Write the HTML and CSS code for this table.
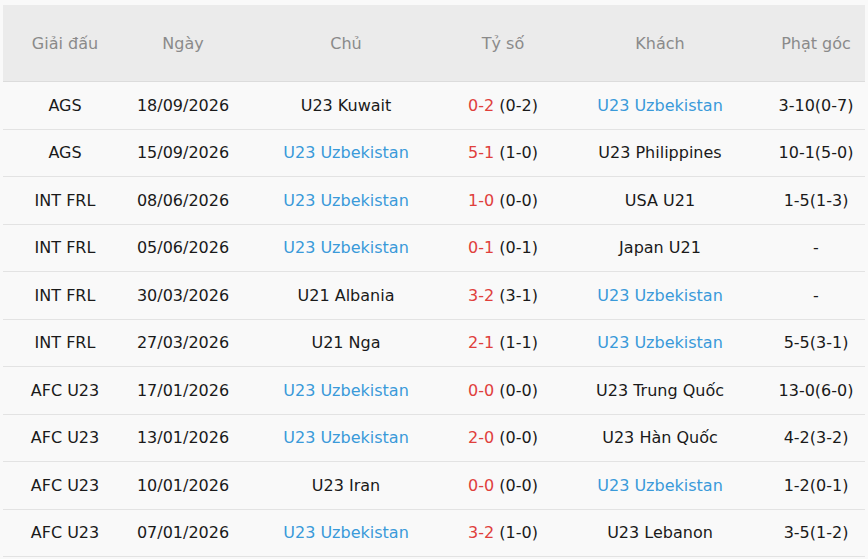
FILE: index.html
```html
<!DOCTYPE html>
<html lang="vi">
<head>
<meta charset="utf-8">
<link rel="stylesheet" href="styles.css">
</head>
<body>
<table class="matches">
  <colgroup>
    <col class="c1"><col class="c2"><col class="c3"><col class="c4"><col class="c5"><col class="c6">
  </colgroup>
  <thead>
    <tr><th>Giải đấu</th><th>Ngày</th><th>Chủ</th><th>Tỷ số</th><th>Khách</th><th>Phạt góc</th></tr>
  </thead>
  <tbody>
    <tr><td>AGS</td><td>18/09/2026</td><td>U23 Kuwait</td><td><span class="ft">0-2</span> (0-2)</td><td class="team">U23 Uzbekistan</td><td>3-10(0-7)</td></tr>
    <tr><td>AGS</td><td>15/09/2026</td><td class="team">U23 Uzbekistan</td><td><span class="ft">5-1</span> (1-0)</td><td>U23 Philippines</td><td>10-1(5-0)</td></tr>
    <tr><td>INT FRL</td><td>08/06/2026</td><td class="team">U23 Uzbekistan</td><td><span class="ft">1-0</span> (0-0)</td><td>USA U21</td><td>1-5(1-3)</td></tr>
    <tr><td>INT FRL</td><td>05/06/2026</td><td class="team">U23 Uzbekistan</td><td><span class="ft">0-1</span> (0-1)</td><td>Japan U21</td><td>-</td></tr>
    <tr><td>INT FRL</td><td>30/03/2026</td><td>U21 Albania</td><td><span class="ft">3-2</span> (3-1)</td><td class="team">U23 Uzbekistan</td><td>-</td></tr>
    <tr><td>INT FRL</td><td>27/03/2026</td><td>U21 Nga</td><td><span class="ft">2-1</span> (1-1)</td><td class="team">U23 Uzbekistan</td><td>5-5(3-1)</td></tr>
    <tr><td>AFC U23</td><td>17/01/2026</td><td class="team">U23 Uzbekistan</td><td><span class="ft">0-0</span> (0-0)</td><td>U23 Trung Quốc</td><td>13-0(6-0)</td></tr>
    <tr><td>AFC U23</td><td>13/01/2026</td><td class="team">U23 Uzbekistan</td><td><span class="ft">2-0</span> (0-0)</td><td>U23 Hàn Quốc</td><td>4-2(3-2)</td></tr>
    <tr><td>AFC U23</td><td>10/01/2026</td><td>U23 Iran</td><td><span class="ft">0-0</span> (0-0)</td><td class="team">U23 Uzbekistan</td><td>1-2(0-1)</td></tr>
    <tr><td>AFC U23</td><td>07/01/2026</td><td class="team">U23 Uzbekistan</td><td><span class="ft">3-2</span> (1-0)</td><td>U23 Lebanon</td><td>3-5(1-2)</td></tr>
  </tbody>
</table>
</body>
</html>
```
FILE: styles.css
```css
html, body {
  margin: 0;
  padding: 0;
  background: #f9f9f9;
}
body {
  padding: 5px 3px 0 3px;
  font-family: "DejaVu Sans", sans-serif;
  font-size: 16px;
  color: #1a1a1a;
}
.matches {
  width: 862px;
  border-collapse: collapse;
  table-layout: fixed;
}
.c1 { width: 124px; }
.c2 { width: 112px; }
.c3 { width: 214px; }
.c4 { width: 100px; }
.c5 { width: 214px; }
.c6 { width: 98px; }
.matches th {
  height: 76px;
  background: #ebebeb;
  color: #8a8a8a;
  font-weight: normal;
  text-align: center;
  padding: 0;
  border-bottom: 1px solid #dcdcdc;
}
.matches td {
  height: 46.5px;
  padding: 0;
  text-align: center;
  background: #f9f9f9;
  border-bottom: 1px solid #e3e3e3;
  white-space: nowrap;
}
.team { color: #3a9ad9; }
.ft { color: #e0403c; }
```
